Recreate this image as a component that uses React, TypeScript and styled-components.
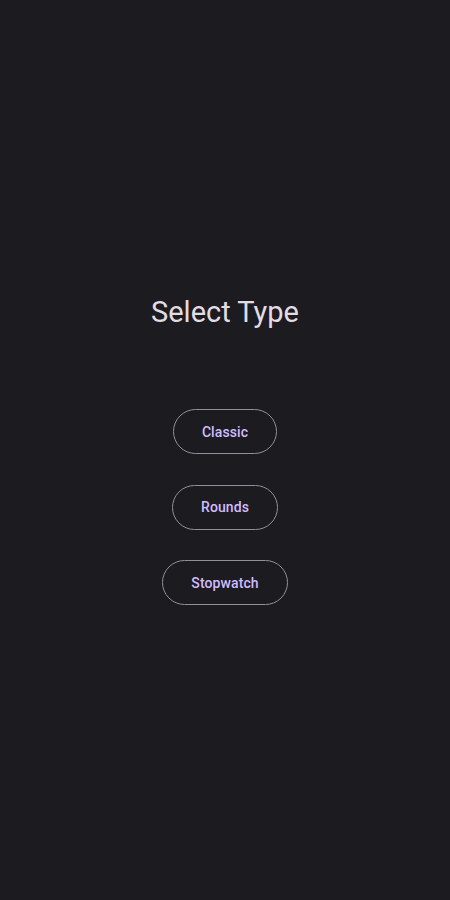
import styled, { createGlobalStyle } from "styled-components";

const GlobalStyle = createGlobalStyle`
  html, body {
    margin: 0;
    padding: 0;
    background: #1c1b1f;
  }
  body {
    font-family: Roboto, "Noto Sans", sans-serif;
  }
`;

const Screen = styled.div`
  width: 450px;
  height: 900px;
  background: #1c1b1f;
  display: flex;
  flex-direction: column;
  align-items: center;
  padding-top: 294px;
  box-sizing: border-box;
`;

const Title = styled.h1`
  margin: 0;
  font-size: 29px;
  line-height: 37px;
  font-weight: 400;
  color: #e2dde4;
`;

const ButtonList = styled.div`
  margin-top: 78px;
  display: flex;
  flex-direction: column;
  align-items: center;
  gap: 30.5px;
`;

const TypeButton = styled.button`
  height: 45px;
  padding: 0 28px;
  border-radius: 23px;
  border: 1px solid #938f99;
  background: transparent;
  color: #d0bcff;
  font-family: Roboto, "Noto Sans", sans-serif;
  font-size: 14px;
  font-weight: 500;
  letter-spacing: 0.1px;
  cursor: pointer;
`;

const types = ["Classic", "Rounds", "Stopwatch"];

export default function App() {
  return (
    <>
      <GlobalStyle />
      <Screen>
        <Title>Select Type</Title>
        <ButtonList>
          {types.map((t) => (
            <TypeButton key={t}>{t}</TypeButton>
          ))}
        </ButtonList>
      </Screen>
    </>
  );
}
